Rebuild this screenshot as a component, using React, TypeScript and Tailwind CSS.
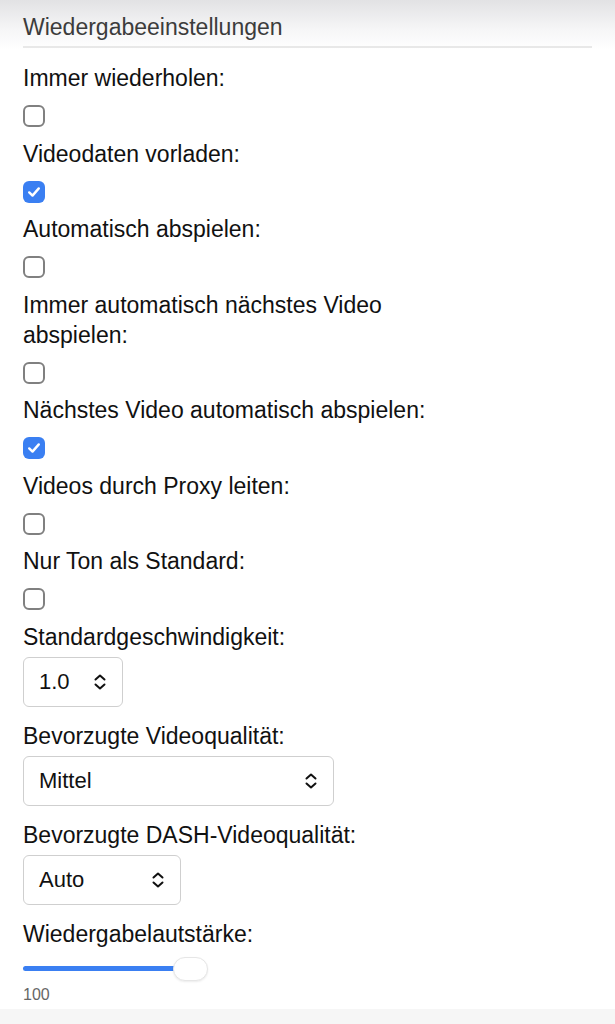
const font = { fontFamily: '"Liberation Sans", Arial, sans-serif' };

function Checkbox({ checked }: { checked?: boolean }) {
  if (checked) {
    return (
      <div className="mt-[12px] mb-[11.5px] flex h-[22px] w-[22px] items-center justify-center rounded-[6px] bg-[#3a7ff2]">
        <svg width="16" height="16" viewBox="0 0 16 16" fill="none">
          <path d="M3.2 8.4 L6.5 11.6 L12.8 4.4" stroke="#fff" strokeWidth="2.4" strokeLinecap="round" strokeLinejoin="round" />
        </svg>
      </div>
    );
  }
  return <div className="mt-[12px] mb-[11.5px] h-[22px] w-[22px] rounded-[6px] border-2 border-[#808080] bg-white" />;
}

function UpDown() {
  return (
    <svg width="14" height="18" viewBox="0 0 14 18" fill="none">
      <path d="M2.5 6.5 L7 2.5 L11.5 6.5" stroke="#111" strokeWidth="2" strokeLinecap="round" strokeLinejoin="round" />
      <path d="M2.5 11.5 L7 15.5 L11.5 11.5" stroke="#111" strokeWidth="2" strokeLinecap="round" strokeLinejoin="round" />
    </svg>
  );
}

function Select({ value, width }: { value: string; width: string }) {
  return (
    <div
      className={`mt-[5px] mb-[14px] flex h-[50px] items-center justify-between rounded-[6px] border border-[#cfcfcf] bg-white pl-[15px] pr-[15px] text-[22px] text-[#111] ${width}`}
    >
      <span>{value}</span>
      <UpDown />
    </div>
  );
}

function Label({ children }: { children: React.ReactNode }) {
  return <div className="max-w-[440px] text-[23px] leading-[30px] text-[#111]">{children}</div>;
}

export default function App() {
  const toggles: [string, boolean][] = [
    ["Immer wiederholen:", false],
    ["Videodaten vorladen:", true],
    ["Automatisch abspielen:", false],
    ["Immer automatisch nächstes Video abspielen:", false],
    ["Nächstes Video automatisch abspielen:", true],
    ["Videos durch Proxy leiten:", false],
    ["Nur Ton als Standard:", false],
  ];

  return (
    <div style={font} className="flex min-h-[1024px] flex-col bg-white">
      <div className="flex flex-col bg-[linear-gradient(to_bottom,#e2e2e4_0px,#f6f6f7_30px,#ffffff_50px)] px-[23px] pt-[12px]">
        {/* Section heading */}
        <h2 className="border-b-2 border-[#e8e8e8] pb-[4px] text-[23px] leading-[30px] font-normal text-[#3c3c3c]">
          Wiedergabeeinstellungen
        </h2>

        <div className="mt-[15px] flex flex-col">
          {toggles.map(([label, checked]) => (
            <div key={label} className="flex flex-col">
              <Label>{label}</Label>
              <Checkbox checked={checked} />
            </div>
          ))}

          <Label>Standardgeschwindigkeit:</Label>
          <Select value="1.0" width="w-[100px]" />

          <Label>Bevorzugte Videoqualität:</Label>
          <Select value="Mittel" width="w-[311px]" />

          <Label>Bevorzugte DASH-Videoqualität:</Label>
          <Select value="Auto" width="w-[158px]" />

          <Label>Wiedergabelautstärke:</Label>

          {/* Volume slider */}
          <div className="relative mt-[8px] flex h-[24px] w-[185px] items-center">
            <div className="h-[5px] w-[160px] rounded-full bg-[#3a7ff2]" />
            <div className="absolute top-0 right-0 h-[24px] w-[35px] rounded-full border border-[#e6e6e6] bg-white shadow-[0_1px_2px_rgba(0,0,0,0.08)]" />
          </div>
          <div className="mt-[4px] text-[16px] leading-[20px] text-[#666]">100</div>
        </div>
      </div>
      <div className="mt-[4px] flex-1 bg-[#f6f6f6]" />
    </div>
  );
}
